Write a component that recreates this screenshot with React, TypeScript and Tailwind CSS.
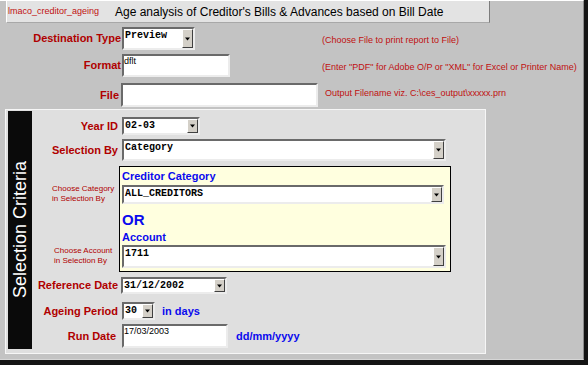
import type { ReactNode } from 'react';

// Classic sunken combo box with a raised drop button on the right
function DropButton() {
  return (
    <div className="w-[11px] shrink-0 bg-[#d4d0c8] border border-t-white border-l-white border-r-[#404040] border-b-[#404040] flex items-center justify-center">
      <svg width="5" height="4" viewBox="0 0 5 4">
        <path d="M0 0.5h5L2.5 3.5z" fill="#000" />
      </svg>
    </div>
  );
}

function Combo({ value, className }: { value: string; className: string }) {
  return (
    <div className={`flex bg-white border-2 border-t-[#6a6a6a] border-l-[#6a6a6a] border-r-[#ececec] border-b-[#ececec] ${className}`}>
      <span className="flex-1 pl-[1px] leading-[14px] font-['Liberation_Mono',monospace] font-bold text-[10px] text-black whitespace-pre">
        {value}
      </span>
      <DropButton />
    </div>
  );
}

function TextBox({ value, className }: { value?: string; className: string }) {
  return (
    <div className={`bg-white border-2 border-t-[#6a6a6a] border-l-[#6a6a6a] border-r-[#ececec] border-b-[#ececec] text-[9px] leading-[11px] text-black ${className}`}>
      {value}
    </div>
  );
}

function Label({ children, className }: { children: ReactNode; className: string }) {
  return <div className={`shrink-0 text-right text-[11px] font-bold text-[#b00000] ${className}`}>{children}</div>;
}

function Hint({ children, className }: { children: ReactNode; className: string }) {
  return <div className={`text-[9px] text-[#c01010] whitespace-nowrap ${className}`}>{children}</div>;
}

export default function App() {
  return (
    <div className="w-[588px] h-[365px] border-r-4 border-b-[5px] border-[#141414] bg-[#c3c3c3] font-['Liberation_Sans',Arial,sans-serif]">
      <div className="h-full border-t border-t-white border-r border-r-[#8a8a8a] border-b border-b-[#d6d6d6] flex flex-col">
        {/* title strip */}
        <div className="ml-[6px] w-[484px] h-[22px] shrink-0 bg-[#e3e3e3] border-l border-l-white border-r border-r-[#7c7c7c] border-b border-b-[#a8a8a8] flex items-center">
          <span className="w-[108px] pl-[1px] text-[9px] text-[#c01010]">lmaco_creditor_ageing</span>
          <span className="text-[12px] text-black">Age analysis of Creditor's Bills &amp; Advances based on Bill Date</span>
        </div>

        {/* output options */}
        <div className="flex items-center h-[23px] mt-[4px] shrink-0">
          <Label className="w-[122px] pr-[1px]">Destination Type</Label>
          <Combo value="Preview" className="w-[73px] h-[23px]" />
          <Hint className="ml-[127px] pt-[4px]">(Choose File to print report to File)</Hint>
        </div>
        <div className="flex items-center h-[23px] mt-[4px] shrink-0">
          <Label className="w-[122px] pr-[1px]">Format</Label>
          <TextBox value="dflt" className="w-[108px] h-[23px]" />
          <Hint className="ml-[92px] pt-[4px]">(Enter "PDF" for Adobe O/P or "XML" for Excel or Printer Name)</Hint>
        </div>
        <div className="flex items-center h-[24px] mt-[6px] shrink-0">
          <Label className="w-[121px] pr-[2px]">File</Label>
          <TextBox className="w-[197px] h-[24px]" />
          <Hint className="ml-[7px] pb-[2px]">Output Filename viz. C:\ces_output\xxxxx.prn</Hint>
        </div>

        {/* selection criteria panel */}
        <div className="mt-[2px] ml-[5px] w-[481px] h-[245px] shrink-0 bg-[#dfdfdf] border border-[#f6f6f6] flex">
          <div className="ml-[2px] mt-[1px] w-[24px] h-[238px] bg-[#0a0a0a] flex items-center justify-center">
            <span className="[writing-mode:vertical-rl] rotate-180 text-white text-[18px] whitespace-nowrap">Selection Criteria</span>
          </div>

          <div className="flex flex-col">
            <div className="flex items-center h-[18px] mt-[7px]">
              <Label className="w-[90px] pr-[4px]">Year ID</Label>
              <Combo value="02-03" className="w-[78px] h-[18px]" />
            </div>
            <div className="flex items-center h-[22px] mt-[4px]">
              <Label className="w-[90px] pr-[4px]">Selection By</Label>
              <Combo value="Category" className="w-[324px] h-[22px]" />
            </div>

            <div className="flex mt-[5px]">
              <div className="w-[87px] shrink-0 text-[8px] leading-[10px] text-[#b00000]">
                <div className="mt-[18px] pl-[20px]">
                  Choose Category
                  <br />
                  in Selection By
                </div>
                <div className="mt-[42px] pl-[22px]">
                  Choose Account
                  <br />
                  in Selection By
                </div>
              </div>
              <div className="w-[332px] h-[106px] bg-[#ffffdf] border border-black pl-[2px] flex flex-col text-[#0a0aee] font-bold">
                <div className="h-[18px] leading-[18px] text-[11px]">Creditor Category</div>
                <Combo value="ALL_CREDITORS" className="w-[322px] h-[19px]" />
                <div className="mt-[6px] h-[20px] leading-[20px] text-[15px]">OR</div>
                <div className="h-[15px] leading-[15px] text-[11px]">Account</div>
                <Combo value="1711" className="w-[324px] h-[23px]" />
              </div>
            </div>

            <div className="flex items-center h-[17px] mt-[5px]">
              <Label className="w-[89px] pr-[3px]">Reference Date</Label>
              <Combo value="31/12/2002" className="w-[106px] h-[17px]" />
            </div>
            <div className="flex items-center h-[18px] mt-[8px]">
              <Label className="w-[90px] pr-[4px]">Ageing Period</Label>
              <Combo value="30" className="w-[33px] h-[18px]" />
              <span className="ml-[7px] text-[11px] font-bold text-[#0a0aee]">in days</span>
            </div>
            <div className="flex items-center h-[24px] mt-[4px]">
              <Label className="w-[90px] pr-[6px]">Run Date</Label>
              <TextBox value="17/03/2003" className="w-[106px] h-[24px]" />
              <span className="ml-[8px] text-[11px] font-bold text-[#0a0aee]">dd/mm/yyyy</span>
            </div>
          </div>
        </div>
      </div>
    </div>
  );
}
